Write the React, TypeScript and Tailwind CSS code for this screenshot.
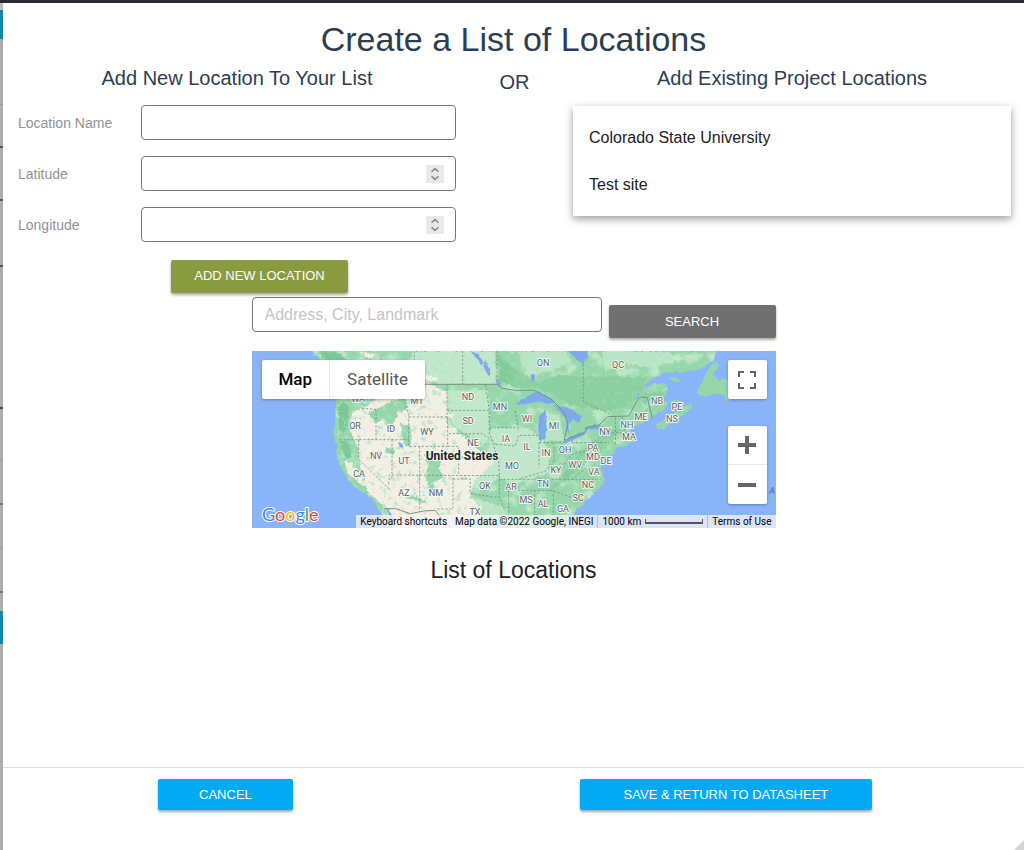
import { useState } from 'react';
import type { ReactNode } from 'react';

type MapLabel = [name: string, x: number, y: number];

const PROJECT_LOCATIONS = ['Colorado State University', 'Test site'];

const STATE_LABELS: MapLabel[] = [
  ['ON', 291, 12], ['QC', 366, 14], ['WA', 106, 48], ['MT', 165, 50],
  ['ND', 216, 46], ['MN', 248, 56], ['SD', 216, 70], ['WI', 275, 68],
  ['MI', 302, 75], ['NB', 405, 50], ['PE', 425, 56], ['ME', 389, 66],
  ['NS', 420, 68], ['NH', 375, 74], ['NY', 353, 81], ['MA', 377, 86],
  ['OR', 103, 75], ['ID', 139, 78], ['WY', 175, 81], ['NE', 221, 92],
  ['IA', 254, 88], ['IL', 275, 96], ['IN', 294, 102], ['OH', 313, 99],
  ['PA', 341, 97], ['MD', 341, 106], ['DE', 354, 110], ['NV', 124, 105],
  ['UT', 152, 110], ['MO', 260, 115], ['KY', 304, 119], ['WV', 323, 114],
  ['VA', 342, 121], ['CA', 107, 123], ['OK', 233, 135], ['AR', 259, 136],
  ['TN', 291, 133], ['NC', 336, 134], ['AZ', 152, 142], ['NM', 184, 142],
  ['MS', 274, 149], ['AL', 291, 153], ['SC', 326, 147], ['GA', 311, 158],
  ['TX', 223, 161],
];

// Slices of the page behind the dialog
const BACKDROP = [
  { height: 7, color: '#bdbcc0' },
  { height: 29, color: '#1287a3' },
  { height: 65, color: '#acabad' },
  { height: 1, color: '#98979a' },
  { height: 41, color: '#acabad' },
  { height: 2, color: '#57565b' },
  { height: 51, color: '#acabad' },
  { height: 2, color: '#57565b' },
  { height: 64, color: '#acabad' },
  { height: 2, color: '#57565b' },
  { height: 140, color: '#acabad' },
  { height: 2, color: '#48474b' },
  { height: 50, color: '#acabad' },
  { height: 1, color: '#98979a' },
  { height: 43, color: '#acabad' },
  { height: 2, color: '#77767a' },
  { height: 42, color: '#acabad' },
  { height: 1, color: '#98979a' },
  { height: 43, color: '#acabad' },
  { height: 2, color: '#77767a' },
  { height: 18, color: '#acabad' },
  { height: 33, color: '#1287a3' },
];

function Backdrop() {
  return (
    <div className="w-[3px] shrink-0 bg-[#acabad]" aria-hidden="true">
      {BACKDROP.map((s, i) => (
        <div key={i} style={{ height: s.height, backgroundColor: s.color }} />
      ))}
    </div>
  );
}

function Field({ id, label, numeric }: { id: string; label: string; numeric?: boolean }) {
  return (
    <div className="flex items-center">
      <label htmlFor={id} className="w-[123px] shrink-0 text-sm text-[#929292]">
        {label}
      </label>
      <div className="relative flex-1">
        <input
          id={id}
          type={numeric ? 'number' : 'text'}
          className="block h-[35px] w-full rounded border border-[#77777b] bg-white px-3 text-base text-[#212121] outline-none [appearance:textfield] [&::-webkit-inner-spin-button]:appearance-none"
        />
        {numeric && (
          <span className="pointer-events-none absolute top-[9px] right-3 flex h-[18px] w-[18px] items-center justify-center bg-[#e9e9ed]">
            <svg viewBox="0 0 18 18" className="h-full w-full" fill="none" stroke="#85858a" strokeWidth="1.5">
              <path d="M5.5 6.8 9 3.6l3.5 3.2M5.5 11.2 9 14.4l3.5-3.2" />
            </svg>
          </span>
        )}
      </div>
    </div>
  );
}

function MapTerrain() {
  return (
    <svg viewBox="0 0 524 177" preserveAspectRatio="xMidYMid slice" className="absolute inset-0 h-full w-full" aria-hidden="true">
      <defs>
        <filter id="rough" x="-5%" y="-5%" width="110%" height="110%">
          <feTurbulence type="fractalNoise" baseFrequency="0.12" numOctaves="3" seed="4" result="n" />
          <feDisplacementMap in="SourceGraphic" in2="n" scale="12" xChannelSelector="R" yChannelSelector="G" />
        </filter>
        <filter id="coast" x="-5%" y="-5%" width="110%" height="110%">
          <feTurbulence type="fractalNoise" baseFrequency="0.25" numOctaves="2" seed="9" result="n" />
          <feDisplacementMap in="SourceGraphic" in2="n" scale="3" xChannelSelector="R" yChannelSelector="G" />
        </filter>
        <filter id="mottle" x="0" y="0" width="100%" height="100%">
          <feTurbulence type="fractalNoise" baseFrequency="0.07" numOctaves="4" seed="21" />
          <feColorMatrix values="0 0 0 0 0.78  0 0 0 0 0.93  0 0 0 0 0.81  5 0 0 0 -2.6" />
        </filter>
        <filter id="speckle" x="0" y="0" width="100%" height="100%">
          <feTurbulence type="fractalNoise" baseFrequency="0.2" numOctaves="3" seed="3" />
          <feColorMatrix values="0 0 0 0 0.45  0 0 0 0 0.76  0 0 0 0 0.55  7 0 0 0 -4" />
        </filter>
        <clipPath id="land">
          <path transform="scale(0.33333)" d="M175 0 200 20 225 45 245 90 252 150 250 210 244 255 257 290 255 320 268 350 282 375 300 400 325 420 345 430 362 445 372 465 390 490 410 535H945L955 500 981 470 1016 436 1054 400 1057 382 1046 352 1052 325 1072 332 1084 304 1092 290 1125 284 1136 272 1152 272 1148 260 1132 244 1142 226 1172 216 1198 198 1232 180 1248 158 1234 148 1246 118 1242 100 1205 98 1175 112 1158 138 1140 155 1160 128 1190 90 1235 65 1292 62 1345 55 1385 28 1392 0Z" />
        </clipPath>
      </defs>
      <rect width="524" height="177" fill="#8ab4f8" />

      <g filter="url(#coast)">
        <g clipPath="url(#land)">
          <rect width="524" height="177" fill="#95d7aa" />
          <rect width="524" height="177" filter="url(#mottle)" opacity="0.5" />
          <g transform="scale(0.33333)" filter="url(#rough)">
            <path fill="#8bd0a1" d="M740 20 790 55 860 95 920 70 980 80 1080 75 1180 80 1170 120 1130 165 1060 180 960 165 900 130 850 110 790 112 745 90Z" />
            <path fill="#c2e8cc" d="M480 0H730V100H560L480 60ZM585 118H708L712 240 730 262 690 280 600 220ZM720 230 830 230 900 300 880 370 790 400 740 380 690 420 640 400 700 330Z" />
            <path fill="#c2e8cc" opacity="0.8" d="M800 0H940L960 30 900 60 860 60 810 50ZM1050 0H1230L1300 20 1200 50 1120 40 1060 60ZM870 190 925 190 935 270 880 270ZM660 440 760 470 800 540H640Z" />
            <path fill="#f4efe5" d="M300 185 345 165 400 120 470 105 530 95 585 125 590 215 640 262 725 335 668 385 655 440 690 470 640 545H430L400 470 350 425 325 350 318 290 295 240Z" />
            <path fill="#f4efe5" d="M275 330 300 335 345 405 330 402 290 370ZM520 70 560 78 558 90 520 92ZM580 190 612 185 600 205ZM330 5 370 8 365 20 335 18Z" />
            <path fill="#95d7aa" d="M345 185 375 175 420 150 455 140 470 170 440 180 425 215 405 225 395 200 370 215ZM445 215 475 225 480 280 460 288 450 250ZM515 310 545 305 570 330 560 350 575 380 540 395 560 425 535 420 520 370 530 345ZM450 425 500 440 530 458 500 452 450 436ZM400 290 430 295 425 310 405 305Z" />
            <path fill="#7cc796" d="M258 150 290 160 285 230 262 255ZM262 270 290 275 300 320 280 325ZM200 0 260 5 300 40 240 60Z" />
            <path fill="#7cc796" opacity="0.55" d="M1020 270 1060 240 1110 230 1080 280 1030 310 960 370 900 420 880 430 930 370ZM1175 130 1250 118 1230 140 1170 160ZM735 0 790 60 780 100 740 90Z" />
          </g>
          <rect x="84" width="130" height="177" filter="url(#speckle)" opacity="0.75" />
          <rect x="214" width="310" height="177" filter="url(#speckle)" opacity="0.25" />
        </g>
        <g transform="scale(0.33333)" fill="#95d7aa">
          <path d="M1212 220 1250 195 1275 178 1300 165 1314 158 1322 170 1290 195 1258 215 1232 235 1216 233Z" />
          <path d="M1258 148 1290 150 1300 160 1262 158ZM1250 78 1275 80 1290 94 1262 90Z" />
          <path d="M1334 128 1350 90 1370 55 1384 30 1398 40 1386 72 1400 90 1420 82 1432 98 1460 95 1490 130 1470 150 1462 132 1440 140 1425 152 1418 134 1395 128 1360 136Z" />
        </g>
        <g transform="scale(0.33333)" fill="#7fa9ee">
          <path d="M790 158 830 134 856 120 890 138 910 152 890 160 858 150 830 158 800 162Z" />
          <path d="M862 196 880 176 884 210 880 262 862 274 858 230Z" />
          <path d="M905 162 950 172 990 196 984 214 962 208 950 222 952 250 942 232 944 205Z" />
          <path d="M932 272 960 256 1000 240 998 250 962 268 938 278Z" />
          <path d="M998 228 1030 222 1048 224 1036 234 1002 238Z" />
          <path d="M950 0H1008L1006 22 992 38 974 26Z" />
          <path d="M655 0 680 10 696 35 688 42 672 22ZM700 25 716 68 708 72 694 45ZM735 84 748 96 744 108 734 100ZM836 68 850 72 848 90 838 92Z" />
          <path d="M438 272 450 278 455 290 444 288ZM402 472 412 480 430 510 420 515Z" />
        </g>
      </g>

      <g transform="scale(0.33333)" fill="none" stroke="#7a9282" strokeWidth="3">
        <path d="M485 100H735L750 112 790 118 846 118 896 143 936 183 948 222 936 268 1000 244 1002 230 1040 223 1068 197 1130 195 1162 138 1186 140 1201 203M396 473H430L475 488 515 480 550 478 575 510 600 535" />
        <path
          strokeWidth="2.5"
          strokeDasharray="7 5"
          d="M632 0V100M487 0V40M735 0V95M585 100V215M585 178H710M700 100 712 178V250L732 285M470 198H587V286H470ZM262 266H470M372 175V266M330 172 372 175M420 266V380M320 266V325L412 415M410 400 412 372 740 374M503 286V475M587 286H620V374M590 248H690L720 268 735 318H620M603 382V474H555M603 384H655V428L740 440M742 374V440L760 480M712 230H790M732 280 790 285 800 253H862M740 318 742 374M790 180 800 240M861 275V350M906 275V330M861 275H935M994 40V152L1076 190M742 385H1046M786 418H900L960 440M848 418V495M904 418V495M906 330 880 360 800 385M936 340 960 310 1000 300 1052 320M960 275H1070M1090 200V280M1110 197 1120 245M1080 245H1130M960 385 1010 345M770 418V500M450 130 472 198M395 40 430 130"
        />
      </g>

      <g fontFamily="Roboto, sans-serif" fontSize="9" fill="#5b6066" textAnchor="middle" stroke="#f3f8f3" strokeWidth="2" strokeLinejoin="round" paintOrder="stroke">
        {STATE_LABELS.map(([name, x, y]) => (
          <text key={name} x={x} y={y + 3}>{name}</text>
        ))}
        <text x="210" y="109" fontSize="12" fontWeight="700" fill="#202124">United States</text>
        <text x="523" y="143" fontStyle="italic" fill="#4568a5" stroke="none" textAnchor="end">A</text>
      </g>
    </svg>
  );
}

function GoogleLogo() {
  return (
    <svg viewBox="0 0 58 22" className="h-[22px] w-[58px]" role="img" aria-label="Google">
      <text x="1" y="17" fontFamily="Lato, sans-serif" fontSize="18" stroke="#fff" strokeWidth="2" strokeLinejoin="round" paintOrder="stroke">
        <tspan fill="#4285f4">G</tspan>
        <tspan fill="#ea4335">o</tspan>
        <tspan fill="#fbbc04">o</tspan>
        <tspan fill="#4285f4">g</tspan>
        <tspan fill="#34a853">l</tspan>
        <tspan fill="#ea4335">e</tspan>
      </text>
    </svg>
  );
}

function MapButton({ label, children }: { label: string; children: ReactNode }) {
  return (
    <button type="button" aria-label={label} className="flex h-[39px] w-[39px] items-center justify-center">
      <svg viewBox="0 0 18 18" className="h-[18px] w-[18px]" fill="none" stroke="#666">
        {children}
      </svg>
    </button>
  );
}

function LocationMap() {
  const [mapType, setMapType] = useState<'Map' | 'Satellite'>('Map');

  return (
    <div className="relative h-[177px] overflow-hidden bg-[#8ab4f8] font-[Roboto,sans-serif]">
      <MapTerrain />

      {/* Map type */}
      <div className="absolute top-[9px] left-[10px] flex h-[39px] rounded-xs bg-white text-[17px] shadow-[0_1px_3px_rgba(0,0,0,0.3)]">
        {(['Map', 'Satellite'] as const).map((type) => (
          <button
            key={type}
            type="button"
            onClick={() => setMapType(type)}
            className={`border-r border-[#ececec] px-[17px] last:border-r-0 ${mapType === type ? 'font-medium text-black' : 'text-[#565656]'}`}
          >
            {type}
          </button>
        ))}
      </div>

      <div className="absolute top-[9px] right-[9px] rounded-xs bg-white shadow-[0_1px_3px_rgba(0,0,0,0.3)]">
        <MapButton label="Toggle fullscreen view">
          <path strokeWidth="2" d="M1 6V1h5M12 1h5v5M17 12v5h-5M6 17H1v-5" />
        </MapButton>
      </div>

      <div className="absolute top-[75px] right-[9px] divide-y divide-[#e6e6e6] rounded-xs bg-white shadow-[0_1px_3px_rgba(0,0,0,0.3)]">
        <MapButton label="Zoom in">
          <path strokeWidth="4" d="M0 9h18M9 0v18" />
        </MapButton>
        <MapButton label="Zoom out">
          <path strokeWidth="4" d="M0 9h18" />
        </MapButton>
      </div>

      <a href="#google" className="absolute bottom-[2px] left-[9px]">
        <GoogleLogo />
      </a>

      {/* Attribution bar */}
      <div className="absolute right-0 bottom-0 flex h-[13px] items-center divide-x divide-[#a9c0e6] bg-[#f5f5f5]/75 text-[10px] leading-[13px] whitespace-nowrap text-black">
        <div className="flex gap-2 px-1">
          <button type="button">Keyboard shortcuts</button>
          <span>Map data ©2022 Google, INEGI</span>
        </div>
        <div className="flex items-center gap-1 px-1">
          <span>1000 km</span>
          <span className="h-[5px] w-[58px] border-x border-b-2 border-[#555]" />
        </div>
        <a href="#terms" className="px-1">Terms of Use</a>
      </div>
    </div>
  );
}

export default function App() {
  return (
    <div className="flex min-h-screen flex-col bg-white font-['Liberation_Sans',Arial,sans-serif]">
      <div className="h-[3px] bg-[#2b2a33]" />
      <div className="flex flex-1">
        <Backdrop />

        <main className="relative flex flex-1 flex-col">
          <h1 className="pt-4 text-center text-[34px] leading-10 text-[#2c3e50]">Create a List of Locations</h1>

          <div className="grid grid-cols-[1fr_117px_1fr] pt-[7px] pr-[13px] pl-[15px] text-center text-xl text-[#2c3e50]">
            <section>
              <h2 className="leading-6">Add New Location To Your List</h2>
              <form className="flex flex-col gap-4 pt-[15px] text-left">
                <Field id="location-name" label="Location Name" />
                <Field id="latitude" label="Latitude" numeric />
                <Field id="longitude" label="Longitude" numeric />
                <button
                  type="button"
                  className="mt-[2px] ml-[153px] h-[33px] w-[177px] rounded-xs bg-[#8a9a3f] text-[13px] text-white shadow-[0_2px_3px_rgba(0,0,0,0.35)]"
                >
                  ADD NEW LOCATION
                </button>
              </form>
            </section>

            <p className="pt-1 leading-6">OR</p>

            <section>
              <h2 className="leading-6">Add Existing Project Locations</h2>
              <ul className="mt-4 bg-white py-2 text-left text-base text-[#212121] shadow-[0_3px_8px_rgba(0,0,0,0.4)]">
                {PROJECT_LOCATIONS.map((name) => (
                  <li key={name}>
                    <button type="button" className="h-[47px] w-full px-4 text-left">{name}</button>
                  </li>
                ))}
              </ul>
            </section>
          </div>

          <div className="mx-auto w-full max-w-[524px] pt-1">
            <div className="flex items-start gap-[7px] pb-[13px]">
              <input
                type="text"
                aria-label="Address, City, Landmark"
                placeholder="Address, City, Landmark"
                className="h-[35px] min-w-0 flex-1 rounded border border-[#77777b] px-3 text-base outline-none placeholder:text-[#c4c4c4]"
              />
              <button
                type="button"
                className="mt-2 h-[33px] w-[167px] rounded-xs bg-[#707070] text-[13px] text-white shadow-[0_2px_3px_rgba(0,0,0,0.35)]"
              >
                SEARCH
              </button>
            </div>
            <LocationMap />
          </div>

          <h2 className="flex-1 pt-[26px] text-center text-[23px] leading-8 text-[#212121]">List of Locations</h2>

          <footer className="grid h-[83px] grid-cols-[4fr_5fr] items-start justify-items-center border-t border-[#dfdfdf] pt-[11px] pr-5 text-[13px] text-white">
            <button type="button" className="h-[31px] w-[135px] rounded-xs bg-[#03a9f4] shadow-[0_2px_3px_rgba(0,0,0,0.35)]">
              CANCEL
            </button>
            <button type="button" className="h-[31px] w-[292px] rounded-xs bg-[#03a9f4] shadow-[0_2px_3px_rgba(0,0,0,0.35)]">
              SAVE &amp; RETURN TO DATASHEET
            </button>
          </footer>

          {/* Resize handle */}
          <svg viewBox="0 0 10 10" className="absolute right-0 bottom-0 h-[10px] w-[10px]" aria-hidden="true">
            <path d="M10 0v10H0z" fill="#d4d4d4" />
          </svg>
        </main>
      </div>
    </div>
  );
}
